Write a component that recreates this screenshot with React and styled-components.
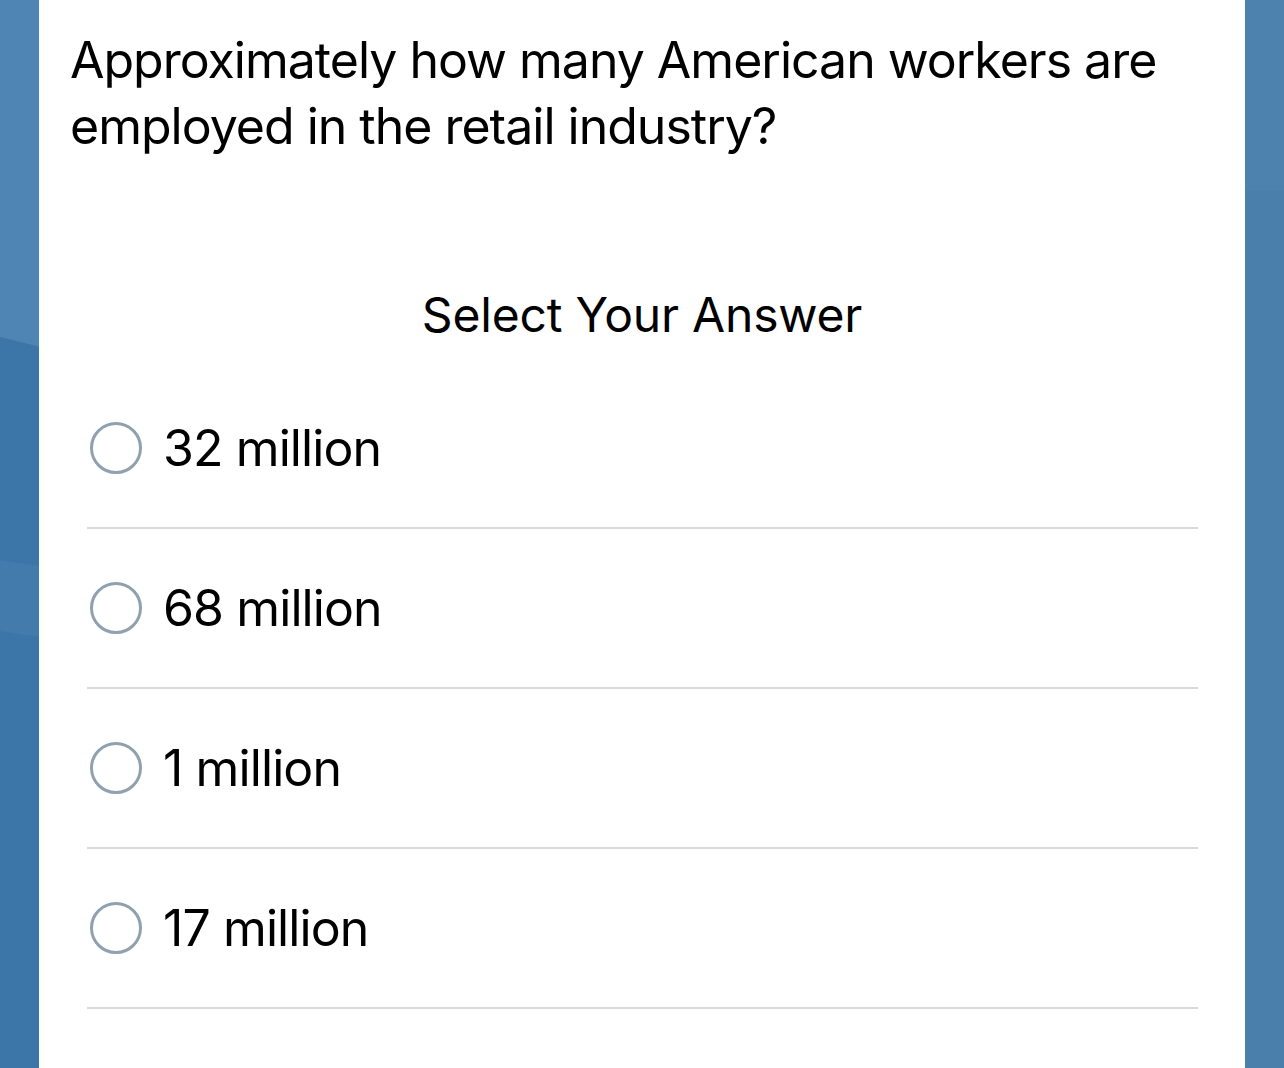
import React from "react";
import styled, { createGlobalStyle } from "styled-components";

const GlobalStyle = createGlobalStyle`
  html, body {
    margin: 0;
    padding: 0;
  }
  body {
    font-family: Inter, "Noto Sans", "Liberation Sans", sans-serif;
    color: #000;
    min-height: 100vh;
    background-color: #4b7fac;
    background-image:
      linear-gradient(188deg, rgba(255, 255, 255, 0) 0 560px, rgba(255, 255, 255, 0.035) 561px 630px, rgba(255, 255, 255, 0) 631px),
      linear-gradient(194deg, #4f85b5 0 336px, #3c76a9 337px 100%),
      linear-gradient(180deg, #4d81ae 0 190px, #4a7eab 191px 100%);
    background-size: 40px 100%, 40px 100%, 100% 100%;
    background-position: left top, left top, left top;
    background-repeat: no-repeat;
  }
`;

const Page = styled.div`
  display: flex;
  justify-content: center;
  min-height: 100vh;
`;

const Card = styled.main`
  width: 1206px;
  min-height: 1068px;
  box-sizing: border-box;
  background: #ffffff;
  padding: 27px 31px 40px;
`;

const Question = styled.h1`
  margin: 0;
  font-size: 50px;
  font-weight: 400;
  line-height: 66px;
  letter-spacing: -1px;
`;

const AnswerHeading = styled.h2`
  margin: 126px 0 0;
  text-align: center;
  font-size: 48px;
  font-weight: 400;
  line-height: 60px;
  letter-spacing: -0.2px;
`;

const OptionList = styled.ul`
  list-style: none;
  margin: 24px 16px 0 17px;
  padding: 0;
`;

const Option = styled.li`
  display: flex;
  align-items: center;
  gap: 21px;
  height: 158px;
  border-bottom: 2px solid #d9d9d9;
  cursor: pointer;
`;

const Radio = styled.span`
  flex: none;
  width: 52px;
  height: 52px;
  margin-left: 3px;
  box-sizing: border-box;
  border: 3px solid #8fa1ae;
  border-radius: 50%;
  background: ${p => (p.checked ? "#8fa1ae" : "transparent")};
`;

const OptionLabel = styled.span`
  font-size: 50px;
  line-height: 60px;
  letter-spacing: -0.9px;
`;

const ANSWERS = ["32 million", "68 million", "1 million", "17 million"];

const App = () => {
  return (
    <>
      <GlobalStyle />
      <Page>
        <Card>
          <Question>
            Approximately how many American workers are employed in the retail industry?
          </Question>
          <AnswerHeading>Select Your Answer</AnswerHeading>
          <OptionList>
            {ANSWERS.map(a => (
              <Option key={a}>
                <Radio />
                <OptionLabel>{a}</OptionLabel>
              </Option>
            ))}
          </OptionList>
        </Card>
      </Page>
    </>
  );
};

export default App;
